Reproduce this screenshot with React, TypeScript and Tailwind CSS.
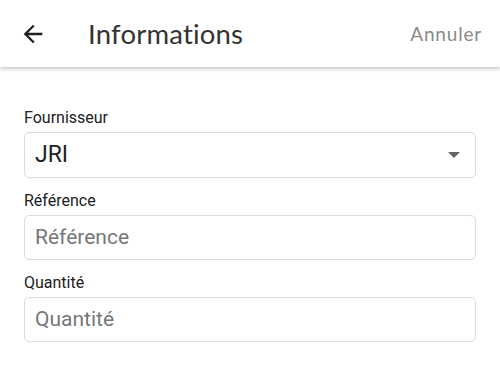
import React from "react";

function Field({ label, children }: { label: string; children: React.ReactNode }) {
  return (
    <div className="flex flex-col">
      <div className="h-[20px] text-[16px] leading-[20px] text-[#212121] font-['Roboto',sans-serif]">{label}</div>
      <div className="mt-[4px]">{children}</div>
    </div>
  );
}

export default function App() {
  return (
    <div className="w-[500px] h-[370px] bg-white overflow-hidden font-['Roboto',sans-serif]">
      <div className="relative z-10 h-[67px] flex items-center bg-white shadow-[0_2px_4px_rgba(0,0,0,0.22)]">
        <div className="ml-[19px] w-[28px] h-[28px] flex items-center justify-center">
          <svg width="28" height="28" viewBox="0 0 24 24" fill="#212121">
            <path d="M20 11H7.83l5.59-5.59L12 4l-8 8 8 8 1.41-1.41L7.83 13H20v-2z" />
          </svg>
        </div>
        <div className="ml-[41px] text-[27.5px] text-[#333] font-['Lato',sans-serif] font-normal tracking-[0.2px] leading-none">Informations</div>
        <div className="ml-auto mr-[18px] text-[19px] text-[#8a8a8a] font-['Lato',sans-serif] tracking-[0.8px] leading-none">Annuler</div>
      </div>
      <div className="px-[24px] pt-[41px] flex flex-col gap-[13px]">
        <Field label="Fournisseur">
          <div className="h-[46px] border border-[#dcdcdc] rounded-[5px] flex items-center pl-[10px] pr-[15px]">
            <span className="text-[23px] text-[#212121]">JRI</span>
            <span className="ml-auto w-0 h-0 border-l-[6px] border-r-[6px] border-t-[6px] border-l-transparent border-r-transparent border-t-[#666]" />
          </div>
        </Field>
        <Field label="Référence">
          <div className="h-[45px] border border-[#dcdcdc] rounded-[5px] flex items-center pl-[10px]">
            <span className="text-[21px] text-[#777]">Référence</span>
          </div>
        </Field>
        <Field label="Quantité">
          <div className="h-[45px] border border-[#dcdcdc] rounded-[5px] flex items-center pl-[10px]">
            <span className="text-[21px] text-[#777]">Quantité</span>
          </div>
        </Field>
      </div>
    </div>
  );
}
